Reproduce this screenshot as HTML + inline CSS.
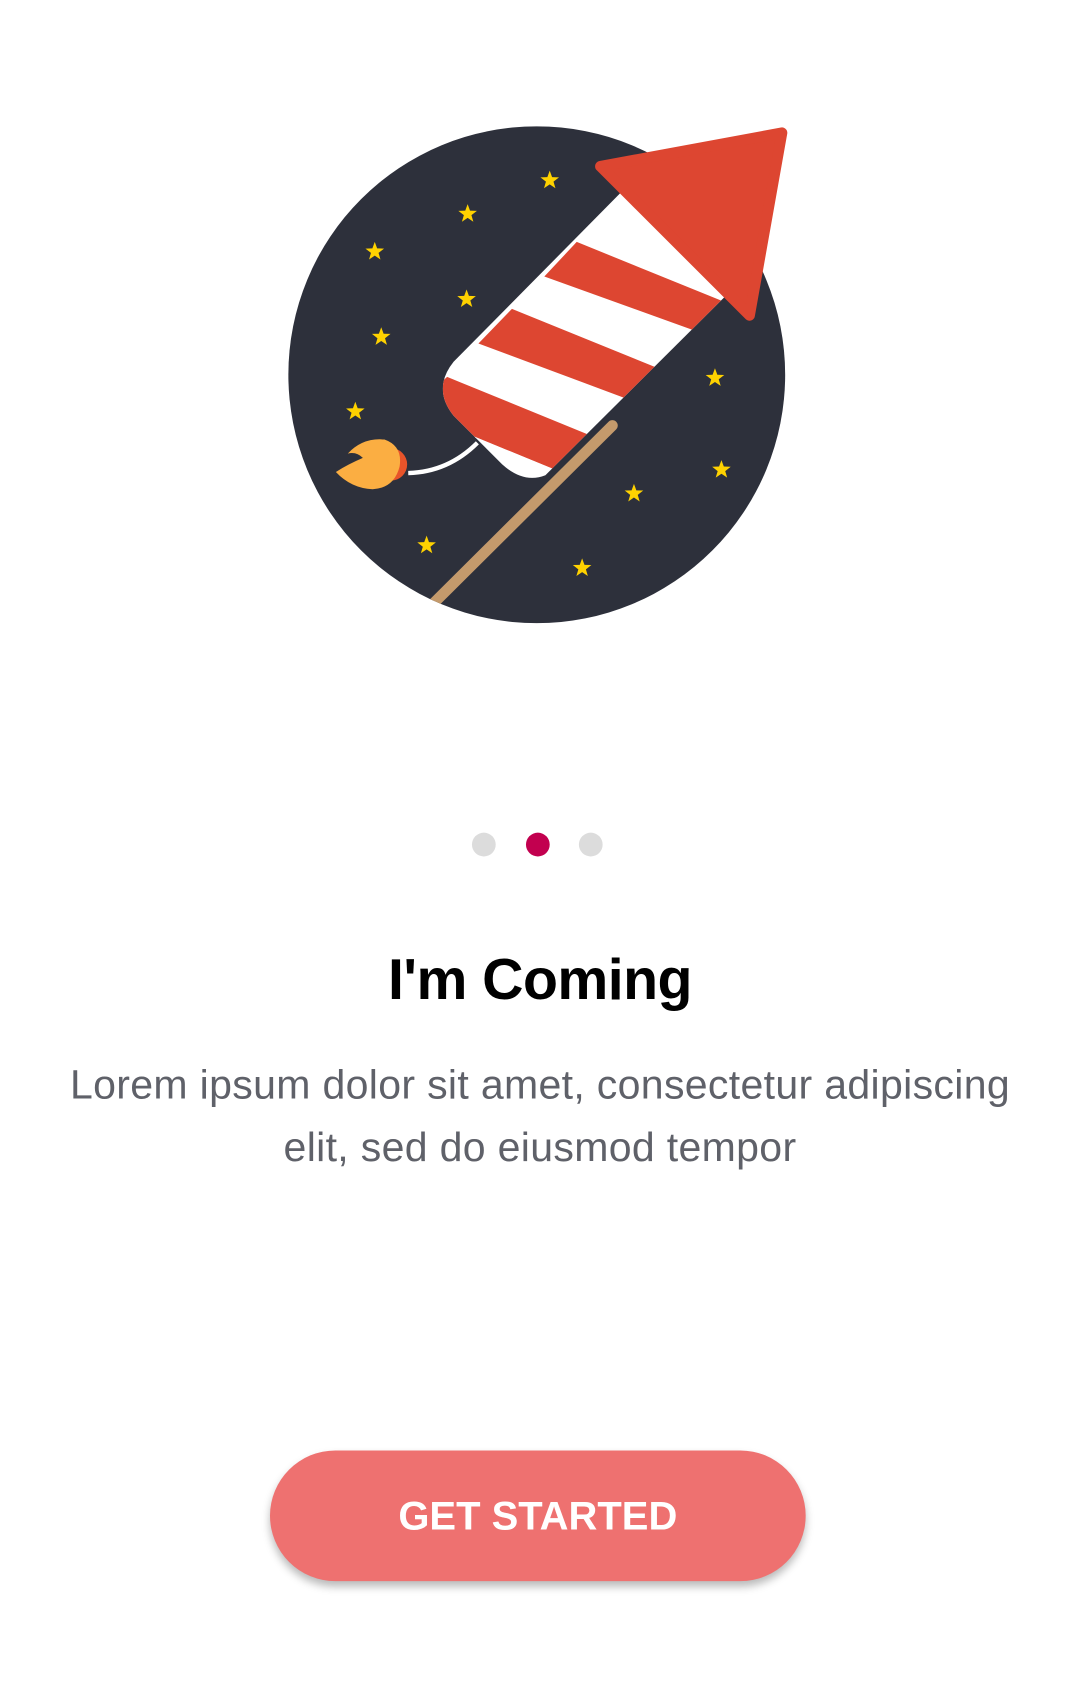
<!DOCTYPE html>
<html><head><meta charset="utf-8"><style>
html,body{margin:0;padding:0;background:#fff;}
body{width:1080px;height:1703px;overflow:hidden;position:relative;}
#w{position:absolute;left:0;top:0;width:1000px;height:1577px;transform:scale(1.08);transform-origin:0 0;font-family:"Liberation Sans",sans-serif;}
.dot{position:absolute;top:771px;width:22px;height:22px;border-radius:50%;background:#dcdcdc;}
h1{position:absolute;left:0;width:1000px;top:877px;margin:0;text-align:center;font-size:53px;font-weight:bold;color:#000;letter-spacing:-0.5px;}
p{position:absolute;left:0;width:1000px;top:976px;margin:0;text-align:center;font-size:38px;line-height:58px;color:#5f6169;letter-spacing:0.3px;}
.btn{position:absolute;left:250px;top:1343px;width:496px;height:121px;border-radius:61px;background:#ee7170;box-shadow:0 5px 8px rgba(0,0,0,0.28);color:#fff;font-size:37px;font-weight:bold;text-align:center;line-height:121px;}
</style></head><body><div id="w">
<svg width="1000" height="700" viewBox="0 0 1000 700" style="position:absolute;left:0;top:0">
<defs>
<clipPath id="circ"><circle cx="497" cy="347" r="230"/></clipPath>
<clipPath id="body"><path d="M585,168 L683,263 L505,440 Q485,448 465,430 L420,385 Q400,360 420,335 Z"/></clipPath>
<symbol id="st" viewBox="-10 -10 20 20"><polygon points="0,-9 2.2,-3 8.6,-2.8 3.5,1.2 5.3,7.3 0,3.7 -5.3,7.3 -3.5,1.2 -8.6,-2.8 -2.2,-3" fill="#ffd200"/></symbol>
</defs>
<circle cx="497" cy="347" r="230" fill="#2d303b"/>
<g>
<use href="#st" x="499" y="157" width="20" height="20"/>
<use href="#st" x="423" y="188" width="20" height="20"/>
<use href="#st" x="337" y="223" width="20" height="20"/>
<use href="#st" x="422" y="267" width="20" height="20"/>
<use href="#st" x="343" y="302" width="20" height="20"/>
<use href="#st" x="319" y="371" width="20" height="20"/>
<use href="#st" x="652" y="340" width="20" height="20"/>
<use href="#st" x="658" y="425" width="20" height="20"/>
<use href="#st" x="577" y="447" width="20" height="20"/>
<use href="#st" x="385" y="495" width="20" height="20"/>
<use href="#st" x="529" y="516" width="20" height="20"/>
</g>
<path d="M378,438 Q415,437 442,410" stroke="#fff" stroke-width="4" fill="none"/>
<g clip-path="url(#body)">
<rect x="380" y="150" width="340" height="320" fill="#fff"/>
<polygon points="534,224 704,293 690,323 504,256" fill="#dd4631"/>
<polygon points="474,286 644,355 628,387 443,318" fill="#dd4631"/>
<polygon points="414,349 583,418 541,446 380,380" fill="#dd4631"/>
<polygon points="380,380 541,446 521,438 434,403" fill="#fff"/>
</g>
<path d="M556,154 L724,123 L694,292 Z" fill="#dd4631" stroke="#dd4631" stroke-width="10" stroke-linejoin="round"/>
<g clip-path="url(#circ)"><line x1="567" y1="394" x2="395" y2="565" stroke="#c49a6c" stroke-width="10" stroke-linecap="round"/></g>
<circle cx="362" cy="430" r="15" fill="#e8542a"/>
<path d="M311,437 Q322,430 336,424 Q330,418 322,420 Q336,405 356,407 Q373,413 370,432 Q365,452 345,453 Q325,452 311,437 Z" fill="#fbae42"/>
</svg>
<div class="dot" style="left:437px"></div>
<div class="dot" style="left:487px;background:#c2004f"></div>
<div class="dot" style="left:536px"></div>
<h1>I'm Coming</h1>
<p>Lorem ipsum dolor sit amet, consectetur adipiscing<br>elit, sed do eiusmod tempor</p>
<div class="btn">GET STARTED</div>
</div></body></html>
